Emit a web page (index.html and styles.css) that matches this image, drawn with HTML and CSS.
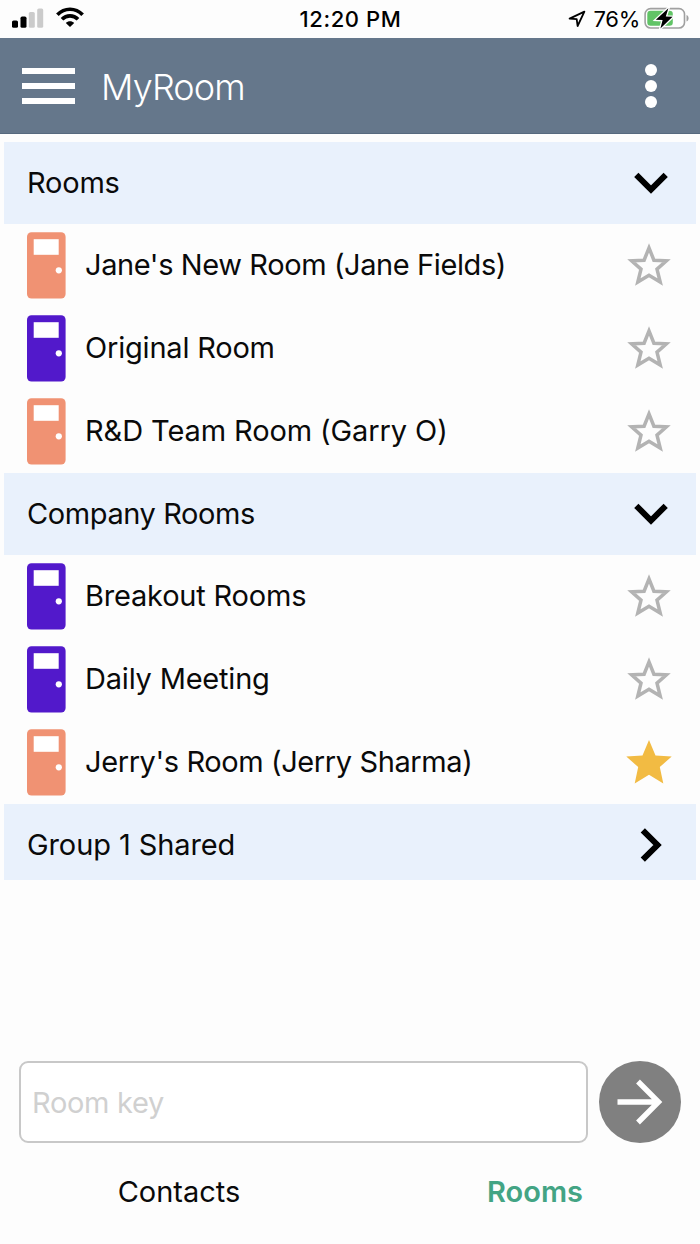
FILE: index.html
```html
<!DOCTYPE html>
<html lang="en">
<head>
    <meta charset="UTF-8">
    <title>MyRoom</title>
    <link rel="stylesheet" href="styles.css">
</head>
<body>
    <!-- shared icons -->
    <svg class="sprite" width="0" height="0">
        <symbol id="door" viewBox="0 0 39 67">
            <rect x="0" y="0.3" width="38.6" height="66.2" rx="4.5" fill="currentColor"/>
            <rect x="6.7" y="7.2" width="25" height="15.6" fill="#fff"/>
            <circle cx="31.8" cy="38.3" r="3.1" fill="#fff"/>
        </symbol>
        <symbol id="star" viewBox="0 0 46 44">
            <path d="M23 4.9 L27.9 17.2 L40.4 17.8 L31 26.2 L34.2 39 L23 32.2 L11.8 39 L15 26.2 L5.6 17.8 L18.1 17.2 Z" fill="none" stroke="currentColor" stroke-width="3.5"/>
        </symbol>
        <symbol id="star-full" viewBox="0 0 46 44">
            <path d="M23 0 L29.5 15.6 L45.7 16.6 L33.8 27 L37.3 43.4 L23 34.8 L8.7 43.4 L12.2 27 L0.3 16.6 L16.5 15.6 Z" fill="currentColor"/>
        </symbol>
        <symbol id="chevron" viewBox="0 0 34 22">
            <path d="M2.3 2.8 L17 17.5 L31.7 2.8" fill="none" stroke="#000" stroke-width="6"/>
        </symbol>
    </svg>

    <div class="status-bar">
        <div class="status-left">
            <svg width="32" height="20" viewBox="0 0 32 20">
                <rect x="0" y="12.4" width="6" height="7.4" rx="1.6"/>
                <rect x="8.5" y="8.6" width="6" height="11.2" rx="1.6"/>
                <rect x="16.8" y="4" width="6" height="15.8" rx="1.6" fill="#cbcbcb"/>
                <rect x="25.2" y="0.4" width="6" height="19.4" rx="1.6" fill="#cbcbcb"/>
            </svg>
            <svg class="wifi" width="28" height="20" viewBox="0 0 28 20">
                <g fill="none" stroke="#000" stroke-width="3.7">
                    <path d="M1.4 7.8 C8.5 0.4 19.5 0.4 26.6 7.8"/>
                    <path d="M6 12.2 C10.5 7.7 17.5 7.7 22 12.2"/>
                </g>
                <path d="M14 20 L9.8 15.9 C12 13.7 16 13.7 18.2 15.9 Z"/>
            </svg>
        </div>
        <div class="status-time">12:20 PM</div>
        <div class="status-right">
            <svg width="18" height="18" viewBox="0 0 18 18">
                <path d="M1.6 8.6 L16.4 1.6 L9.6 16 L8.7 9.1 Z" fill="none" stroke="#000" stroke-width="1.8" stroke-linejoin="round"/>
            </svg>
            <span class="battery-level">76%</span>
            <svg class="battery" width="46" height="24" viewBox="0 0 46 24">
                <rect x="1.1" y="2.6" width="39.4" height="19.4" rx="5.5" fill="#fff" stroke="#a0a0a0" stroke-width="1.6"/>
                <rect x="3.3" y="4.8" width="25.5" height="15" rx="3.2" fill="#61c466"/>
                <path d="M42.5 9 C45.3 10 45.3 14.6 42.5 15.6 Z" fill="#a0a0a0"/>
                <path d="M24.4 2.2 L11.8 13.8 L18.6 14.1 L16.4 22.4 L28.6 10.8 L21.8 10.5 Z" stroke="#fff" stroke-width="2.6" paint-order="stroke"/>
            </svg>
        </div>
    </div>

    <header class="app-bar">
        <div class="hamburger">
            <span></span>
            <span></span>
            <span></span>
        </div>
        <h1>MyRoom</h1>
        <div class="more">
            <span></span>
            <span></span>
            <span></span>
        </div>
    </header>

    <main class="room-list">
        <div class="group">
            <span class="group-name">Rooms</span>
            <svg class="chevron"><use href="#chevron"/></svg>
        </div>
        <div class="room">
            <svg class="door shared"><use href="#door"/></svg>
            <span class="name long">Jane's New Room (Jane Fields)</span>
            <svg class="star"><use href="#star"/></svg>
        </div>
        <div class="room">
            <svg class="door"><use href="#door"/></svg>
            <span class="name">Original Room</span>
            <svg class="star"><use href="#star"/></svg>
        </div>
        <div class="room">
            <svg class="door shared"><use href="#door"/></svg>
            <span class="name wide">R&amp;D Team Room (Garry O)</span>
            <svg class="star"><use href="#star"/></svg>
        </div>

        <div class="group">
            <span class="group-name long">Company Rooms</span>
            <svg class="chevron"><use href="#chevron"/></svg>
        </div>
        <div class="room">
            <svg class="door"><use href="#door"/></svg>
            <span class="name">Breakout Rooms</span>
            <svg class="star"><use href="#star"/></svg>
        </div>
        <div class="room">
            <svg class="door"><use href="#door"/></svg>
            <span class="name">Daily Meeting</span>
            <svg class="star"><use href="#star"/></svg>
        </div>
        <div class="room">
            <svg class="door shared"><use href="#door"/></svg>
            <span class="name long">Jerry's Room (Jerry Sharma)</span>
            <svg class="star favorite"><use href="#star-full"/></svg>
        </div>

        <div class="group collapsed">
            <span class="group-name wide">Group 1 Shared</span>
            <svg class="chevron"><use href="#chevron"/></svg>
        </div>
    </main>

    <footer class="footer">
        <div class="join">
            <input type="text" class="room-key" placeholder="Room key">
            <button class="go" aria-label="Join">
                <svg width="46" height="46" viewBox="0 0 46 46">
                    <path d="M0.5 23 H42 M21 2.5 L41.5 23 L21 43.5" fill="none" stroke="#fff" stroke-width="5.4"/>
                </svg>
            </button>
        </div>
        <nav class="tabs">
            <a class="tab">Contacts</a>
            <a class="tab active">Rooms</a>
        </nav>
    </footer>
</body>
</html>
```

FILE: styles.css
```css
* {
    margin: 0;
    padding: 0;
    box-sizing: border-box;
    font-family: 'Inter', 'Liberation Sans', sans-serif;
}

body {
    width: 700px;
    height: 1244px;
    display: flex;
    flex-direction: column;
    background: #fdfdfd;
    color: #0a0a0a;
    font-size: 29px;
    overflow: hidden;
}

.sprite {
    position: absolute;
}

/* status bar */
.status-bar {
    height: 38px;
    display: grid;
    grid-template-columns: 1fr auto 1fr;
    align-items: center;
    padding: 0 10px 0 12px;
    color: #000;
}

.status-left {
    display: flex;
    gap: 12px;
    margin-top: -3px;
}

.wifi {
    margin-top: -1px;
}

.status-time {
    margin-left: -1px;
    font-size: 22px;
    font-weight: 500;
    letter-spacing: 0.6px;
}

.status-right {
    display: flex;
    align-items: center;
    justify-content: flex-end;
}

.battery-level {
    font-size: 22px;
    letter-spacing: -0.3px;
    margin: 0 4px 0 8px;
}

.battery {
    margin-top: -2px;
}

/* title bar */
.app-bar {
    height: 96px;
    display: flex;
    align-items: center;
    padding: 0 43px 0 22px;
    background: #65778b;
    border-bottom: 1px solid #56697e;
    color: #fff;
}

.hamburger {
    width: 53px;
    display: flex;
    flex-direction: column;
    gap: 9px;
}

.hamburger span {
    height: 6px;
    background: #fff;
}

.app-bar h1 {
    flex: 1;
    margin-left: 26px;
    padding-top: 2px;
    font-size: 36px;
    font-weight: 350;
    letter-spacing: -0.9px;
}

.more {
    display: flex;
    flex-direction: column;
    gap: 4px;
}

.more span {
    width: 12px;
    height: 12px;
    border-radius: 50%;
    background: #fff;
}

/* rooms */
.room-list {
    flex: 1;
    padding: 8px 4px 0;
    letter-spacing: -0.2px;
}

.group {
    height: 82px;
    display: flex;
    align-items: center;
    justify-content: space-between;
    padding: 0 28px 0 23px;
    background: #e9f1fc;
}

.group.collapsed {
    height: 76px;
    padding-top: 6px;
}

.group-name {
    padding-bottom: 2px;
}

.long {
    letter-spacing: -0.4px;
}

.wide {
    letter-spacing: -0.1px;
}

.chevron {
    width: 34px;
    height: 22px;
}

.collapsed .chevron {
    transform: rotate(-90deg);
}

.room {
    height: 83px;
    display: flex;
    align-items: center;
    padding: 0 24px 0 23px;
}

.name {
    flex: 1;
    margin-left: 19px;
    padding-bottom: 2px;
}

.door {
    width: 39px;
    height: 67px;
    color: #5219cb;
}

.door.shared {
    color: #f09273;
}

.star {
    width: 46px;
    height: 44px;
    margin-bottom: 2px;
    color: #b3b3b3;
}

.star.favorite {
    color: #f2bb43;
}

/* room key and tabs */
.footer {
    height: 183px;
}

.join {
    display: flex;
    gap: 11px;
    padding: 0 19px;
}

.room-key {
    flex: 1;
    height: 82px;
    padding: 0 11px;
    border: 2px solid #c8c8c8;
    border-radius: 9px;
    background: #fff;
    font-size: 29px;
    letter-spacing: -0.3px;
}

.room-key::placeholder {
    color: #d0d0d0;
}

.go {
    width: 82px;
    height: 82px;
    display: flex;
    align-items: center;
    justify-content: center;
    border: none;
    border-radius: 50%;
    background: #808080;
}

.tabs {
    display: grid;
    grid-template-columns: 358px 1fr;
    padding-top: 31px;
    text-align: center;
}

.tab.active {
    margin-left: 12px;
    color: #43a484;
    font-weight: 600;
}
```
